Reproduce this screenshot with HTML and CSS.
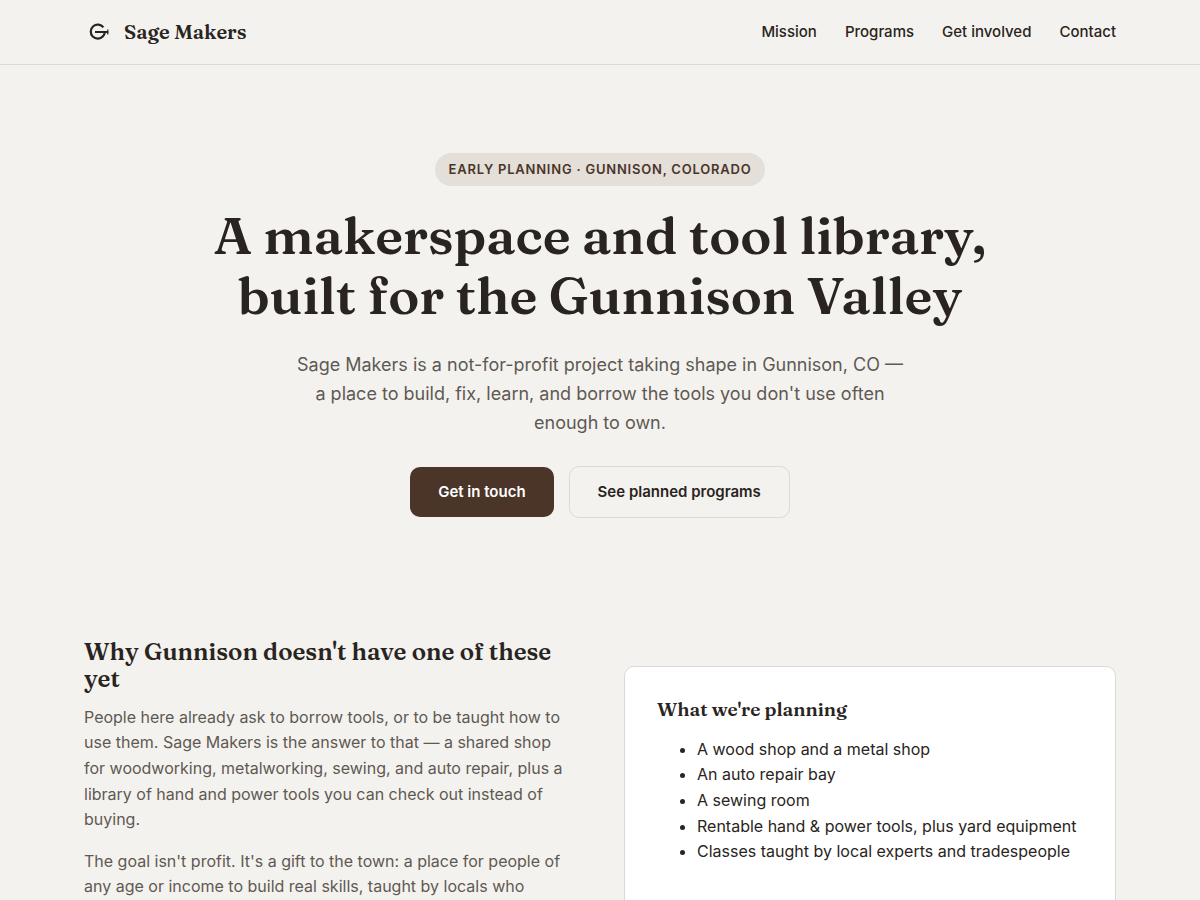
FILE: index.html
```html
<!DOCTYPE html>
<html lang="en">
<head>
<meta charset="utf-8">
<meta name="viewport" content="width=device-width, initial-scale=1">
<title>Sage Makers</title>
<link rel="stylesheet" href="styles.css">
</head>
<body>
<header class="site-header">
  <div class="container header-row">
    <a class="brand" href="#top">
      <svg class="brand-mark" viewBox="0 0 30 30" fill="none" stroke="currentColor" aria-hidden="true">
        <path d="M19.4 10.4A7 7 0 1 0 19 19.2Q20.6 17.8 20.8 15" stroke-width="2.2"/>
        <path d="M11 15H24.2" stroke-width="2"/>
        <path d="M23.8 12.4V17.6" stroke-width="1.2"/>
      </svg>
      <span>Sage Makers</span>
    </a>
    <nav class="site-nav" aria-label="Main">
      <a href="#mission">Mission</a>
      <a href="#programs">Programs</a>
      <a href="#involved">Get involved</a>
      <a href="#contact">Contact</a>
    </nav>
  </div>
</header>
<main id="top">
  <section class="hero container">
    <p class="badge">Early planning · Gunnison, Colorado</p>
    <h1 class="hero-title">A makerspace and tool library, built for the Gunnison Valley</h1>
    <p class="lead">Sage Makers is a not-for-profit project taking shape in Gunnison, CO — a place to build, fix, learn, and borrow the tools you don't use often enough to own.</p>
    <div class="actions">
      <a class="button button-primary" href="#contact">Get in touch</a>
      <a class="button button-outline" href="#programs">See planned programs</a>
    </div>
  </section>
  <section class="mission container" id="mission">
    <div class="mission-copy">
      <h2>Why Gunnison doesn't have one of these yet</h2>
      <p>People here already ask to borrow tools, or to be taught how to use them. Sage Makers is the answer to that — a shared shop for woodworking, metalworking, sewing, and auto repair, plus a library of hand and power tools you can check out instead of buying.</p>
      <p>The goal isn't profit. It's a gift to the town: a place for people of any age or income to build real skills, taught by locals who</p>
    </div>
    <div class="card" id="programs">
      <h3>What we're planning</h3>
      <ul>
        <li>A wood shop and a metal shop</li>
        <li>An auto repair bay</li>
        <li>A sewing room</li>
        <li>Rentable hand &amp; power tools, plus yard equipment</li>
        <li>Classes taught by local experts and tradespeople</li>
      </ul>
    </div>
  </section>
</main>
</body>
</html>
```
FILE: styles.css
```css
:root {
  --bg: #f4f2ee;
  --ink: #292421;
  --muted: #5f5953;
  --line: #dcdad7;
  --brown: #4a3528;
  --serif: Fraunces, "Liberation Serif", serif;
}

* {
  box-sizing: border-box;
}

body {
  margin: 0;
  background: var(--bg);
  color: var(--ink);
  font: 16px/1.6 Inter, sans-serif;
}

h1, h2, h3, p, ul {
  margin: 0;
}

h1, h2, h3 {
  font-family: var(--serif);
  font-weight: 600;
}

a {
  color: inherit;
  text-decoration: none;
}

.container {
  max-width: 1080px;
  margin: 0 auto;
  padding-inline: 24px;
}

.site-header {
  border-bottom: 1px solid var(--line);
}

.header-row {
  display: flex;
  align-items: center;
  justify-content: space-between;
  min-height: 64px;
}

.brand {
  display: flex;
  align-items: center;
  gap: 10px;
  font: 600 20px/32px var(--serif);
}

.brand-mark {
  width: 30px;
  height: 30px;
}

.site-nav {
  display: flex;
  gap: 28px;
  font-size: 15px;
  font-weight: 500;
}

.hero {
  display: flex;
  flex-direction: column;
  align-items: center;
  padding-block: 88px 72px;
  text-align: center;
}

.badge {
  padding: 6px 14px;
  border-radius: 999px;
  background: #e4dfd9;
  color: var(--brown);
  font-size: 13px;
  font-weight: 600;
  letter-spacing: 0.06em;
  text-transform: uppercase;
}

.hero-title {
  max-width: 820px;
  margin-top: 19px;
  font-size: 52px;
  line-height: 60px;
}

.lead {
  max-width: 620px;
  margin-top: 25px;
  color: var(--muted);
  font-size: 18px;
  line-height: 29px;
}

.actions {
  display: flex;
  flex-wrap: wrap;
  align-items: center;
  justify-content: center;
  gap: 15px;
  margin-top: 29px;
}

.button {
  padding: 13px 28px;
  border-radius: 10px;
  font-size: 15px;
  font-weight: 600;
}

.button-primary {
  background: var(--brown);
  color: #fff;
}

.button-outline {
  border: 1px solid var(--line);
}

.mission {
  display: grid;
  grid-template-columns: 1fr 1fr;
  align-items: start;
  gap: 48px;
  padding-block: 48px;
}

.mission-copy h2 {
  font-size: 24px;
  line-height: 27px;
}

.mission-copy p {
  margin-top: 16px;
  color: var(--muted);
}

.mission-copy h2 + p {
  margin-top: 13px;
}

.card {
  margin-top: 28px;
  padding: 32px;
  border: 1px solid var(--line);
  border-radius: 10px;
  background: #fff;
}

.card h3 {
  font-size: 19px;
  line-height: 20px;
}

.card ul {
  margin-block: 18px;
  padding-left: 40px;
}

@media (max-width: 760px) {
  .header-row {
    flex-wrap: wrap;
  }

  .hero-title {
    font-size: 40px;
    line-height: 44px;
  }

  .mission {
    grid-template-columns: 1fr;
  }
}
```
